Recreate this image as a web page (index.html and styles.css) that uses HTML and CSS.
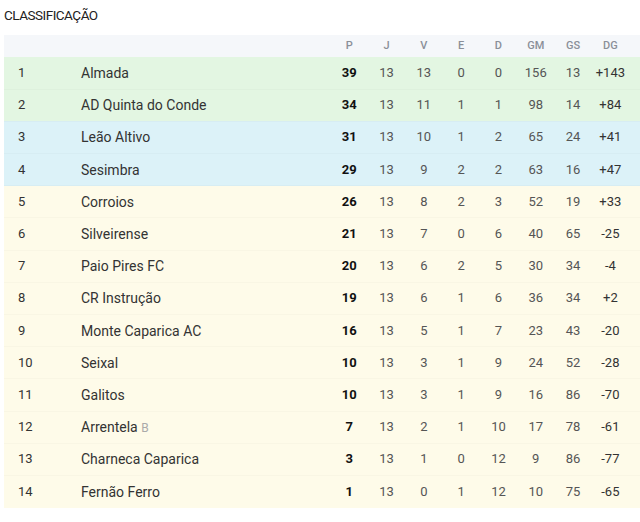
FILE: index.html
```html
<!DOCTYPE html>
<html lang="pt">
<head>
<meta charset="utf-8">
<title>Classificação</title>
<link rel="stylesheet" href="styles.css">
</head>
<body>
<h2 class="title">CLASSIFICAÇÃO</h2>
<table class="standings">
  <thead>
    <tr>
      <th class="pos"></th><th class="team"></th>
      <th class="stat">P</th><th class="stat">J</th><th class="stat">V</th><th class="stat">E</th>
      <th class="stat">D</th><th class="stat">GM</th><th class="stat">GS</th><th class="stat last">DG</th>
    </tr>
  </thead>
  <tbody>
    <tr class="promo"><td class="pos">1</td><td class="team">Almada</td><td class="stat pts">39</td><td class="stat">13</td><td class="stat">13</td><td class="stat">0</td><td class="stat">0</td><td class="stat">156</td><td class="stat">13</td><td class="stat last dg">+143</td></tr>
    <tr class="promo"><td class="pos">2</td><td class="team">AD Quinta do Conde</td><td class="stat pts">34</td><td class="stat">13</td><td class="stat">11</td><td class="stat">1</td><td class="stat">1</td><td class="stat">98</td><td class="stat">14</td><td class="stat last dg">+84</td></tr>
    <tr class="play"><td class="pos">3</td><td class="team">Leão Altivo</td><td class="stat pts">31</td><td class="stat">13</td><td class="stat">10</td><td class="stat">1</td><td class="stat">2</td><td class="stat">65</td><td class="stat">24</td><td class="stat last dg">+41</td></tr>
    <tr class="play"><td class="pos">4</td><td class="team">Sesimbra</td><td class="stat pts">29</td><td class="stat">13</td><td class="stat">9</td><td class="stat">2</td><td class="stat">2</td><td class="stat">63</td><td class="stat">16</td><td class="stat last dg">+47</td></tr>
    <tr class="rest"><td class="pos">5</td><td class="team">Corroios</td><td class="stat pts">26</td><td class="stat">13</td><td class="stat">8</td><td class="stat">2</td><td class="stat">3</td><td class="stat">52</td><td class="stat">19</td><td class="stat last dg">+33</td></tr>
    <tr class="rest"><td class="pos">6</td><td class="team">Silveirense</td><td class="stat pts">21</td><td class="stat">13</td><td class="stat">7</td><td class="stat">0</td><td class="stat">6</td><td class="stat">40</td><td class="stat">65</td><td class="stat last dg">-25</td></tr>
    <tr class="rest"><td class="pos">7</td><td class="team">Paio Pires FC</td><td class="stat pts">20</td><td class="stat">13</td><td class="stat">6</td><td class="stat">2</td><td class="stat">5</td><td class="stat">30</td><td class="stat">34</td><td class="stat last dg">-4</td></tr>
    <tr class="rest"><td class="pos">8</td><td class="team">CR Instrução</td><td class="stat pts">19</td><td class="stat">13</td><td class="stat">6</td><td class="stat">1</td><td class="stat">6</td><td class="stat">36</td><td class="stat">34</td><td class="stat last dg">+2</td></tr>
    <tr class="rest"><td class="pos">9</td><td class="team">Monte Caparica AC</td><td class="stat pts">16</td><td class="stat">13</td><td class="stat">5</td><td class="stat">1</td><td class="stat">7</td><td class="stat">23</td><td class="stat">43</td><td class="stat last dg">-20</td></tr>
    <tr class="rest"><td class="pos">10</td><td class="team">Seixal</td><td class="stat pts">10</td><td class="stat">13</td><td class="stat">3</td><td class="stat">1</td><td class="stat">9</td><td class="stat">24</td><td class="stat">52</td><td class="stat last dg">-28</td></tr>
    <tr class="rest"><td class="pos">11</td><td class="team">Galitos</td><td class="stat pts">10</td><td class="stat">13</td><td class="stat">3</td><td class="stat">1</td><td class="stat">9</td><td class="stat">16</td><td class="stat">86</td><td class="stat last dg">-70</td></tr>
    <tr class="rest"><td class="pos">12</td><td class="team">Arrentela <span class="suffix">B</span></td><td class="stat pts">7</td><td class="stat">13</td><td class="stat">2</td><td class="stat">1</td><td class="stat">10</td><td class="stat">17</td><td class="stat">78</td><td class="stat last dg">-61</td></tr>
    <tr class="rest"><td class="pos">13</td><td class="team">Charneca Caparica</td><td class="stat pts">3</td><td class="stat">13</td><td class="stat">1</td><td class="stat">0</td><td class="stat">12</td><td class="stat">9</td><td class="stat">86</td><td class="stat last dg">-77</td></tr>
    <tr class="rest"><td class="pos">14</td><td class="team">Fernão Ferro</td><td class="stat pts">1</td><td class="stat">13</td><td class="stat">0</td><td class="stat">1</td><td class="stat">12</td><td class="stat">10</td><td class="stat">75</td><td class="stat last dg">-65</td></tr>
  </tbody>
</table>
</body>
</html>
```

FILE: styles.css
```css
html, body {
  margin: 0;
  padding: 0;
  background: #ffffff;
}
body {
  padding: 0 0 0 4px;
  font-family: Roboto, "Noto Sans", sans-serif;
  color: #333;
}
.title {
  margin: 0;
  padding-top: 7px;
  height: 35px;
  box-sizing: border-box;
  font-size: 13.5px;
  font-weight: 400;
  line-height: 16px;
  color: #222;
  letter-spacing: -0.5px;
}
.standings {
  width: 636px;
  border-collapse: collapse;
  table-layout: fixed;
}
.standings thead tr {
  background: #f5f7fa;
  height: 22px;
}
.standings th {
  font-size: 11px;
  font-weight: 500;
  color: #8a8f98;
  padding: 0;
  line-height: 22px;
}
.standings th.pos, .standings td.pos {
  width: 63px;
  padding-left: 14px;
  text-align: left;
}
.standings th.team, .standings td.team {
  width: auto;
  text-align: left;
  padding: 0;
}
.standings th.stat, .standings td.stat {
  width: 37.3px;
  text-align: center;
  padding: 0;
}
.standings th.last, .standings td.last {
  width: 37.3px;
  padding-right: 11px;
}
.standings tbody tr {
  height: 32.2px;
  border-top: 1px solid rgba(0, 0, 0, 0.018);
}
.standings tbody tr:first-child {
  border-top: 0;
}
.standings td {
  font-size: 13px;
  color: #555;
  line-height: 16px;
}
.standings td.pos {
  color: #333;
}
.standings td.team {
  font-size: 14px;
  color: #333;
}
.standings td.pts {
  font-weight: 700;
  color: #111;
}
.standings td.dg {
  color: #333;
}
.suffix {
  font-size: 12px;
  color: #aaa;
}
.promo { background: #e3f6e2; }
.play { background: #dcf2f8; }
.rest { background: #fefbe9; }
```
